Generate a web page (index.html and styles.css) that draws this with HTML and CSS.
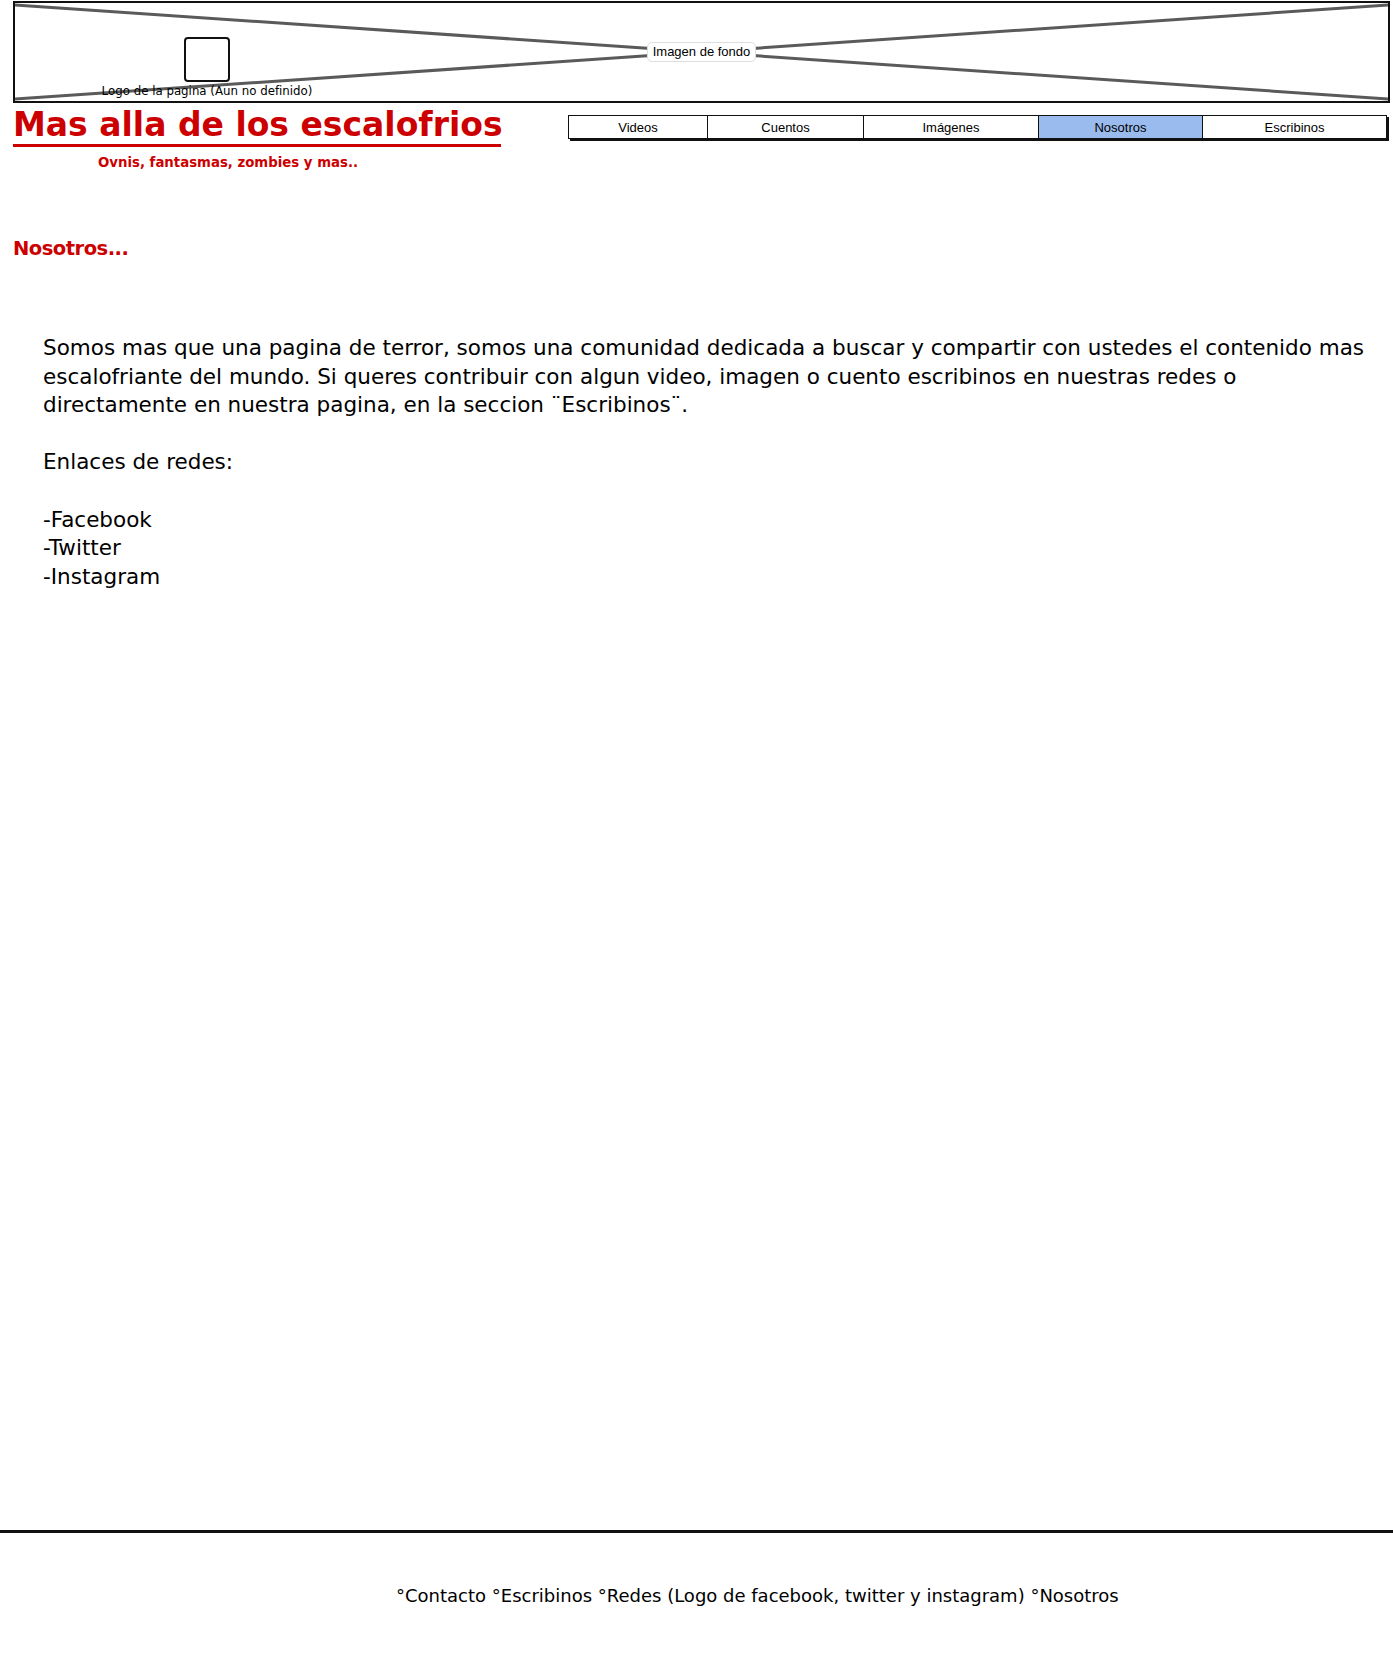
FILE: index.html
```html
<!DOCTYPE html>
<html lang="es">
<head>
<meta charset="utf-8">
<title>Mas alla de los escalofrios - Nosotros</title>
<link rel="stylesheet" href="styles.css">
</head>
<body>
<div class="page">
  <header class="top">
    <div class="banner">
      <svg class="banner-x" viewBox="0 0 100 100" preserveAspectRatio="none">
        <line x1="0" y1="2" x2="100" y2="98" vector-effect="non-scaling-stroke"/>
        <line x1="0" y1="98" x2="100" y2="2" vector-effect="non-scaling-stroke"/>
      </svg>
      <div class="logo">
        <div class="logo-box"></div>
        <div class="logo-label">Logo de la pagina (Aun no definido)</div>
      </div>
      <div class="banner-label">Imagen de fondo</div>
    </div>
    <div class="brand-row">
      <div class="brand">
        <h1 class="title">Mas alla de los escalofrios</h1>
        <p class="subtitle">Ovnis, fantasmas, zombies y mas..</p>
      </div>
      <nav class="nav">
        <a class="nav-item w1">Videos</a>
        <a class="nav-item w2">Cuentos</a>
        <a class="nav-item w3">Imágenes</a>
        <a class="nav-item w4 active">Nosotros</a>
        <a class="nav-item w5">Escribinos</a>
      </nav>
    </div>
  </header>
  <main class="content">
    <h2 class="section-title">Nosotros...</h2>
    <div class="text">
      <p>Somos mas que una pagina de terror, somos una comunidad dedicada a buscar y compartir con ustedes el contenido mas escalofriante del mundo. Si queres contribuir con algun video, imagen o cuento escribinos en nuestras redes o directamente en nuestra pagina, en la seccion ¨Escribinos¨.</p>
      <p>Enlaces de redes:</p>
      <p>-Facebook<br>-Twitter<br>-Instagram</p>
    </div>
  </main>
  <footer class="footer">
    <p class="footer-text">°Contacto °Escribinos °Redes (Logo de facebook, twitter y instagram) °Nosotros</p>
  </footer>
</div>
</body>
</html>
```
FILE: styles.css
```css
* { box-sizing: border-box; }
html, body { margin: 0; padding: 0; background: #fff; }
body { font-family: "DejaVu Sans", Verdana, sans-serif; color: #000; }
.page { width: 1393px; min-height: 1660px; display: flex; flex-direction: column; }

.top { padding: 1px 3px 0 13px; }
.banner {
  position: relative;
  width: 1377px;
  height: 102px;
  border: 2px solid #111;
  display: flex;
  align-items: flex-start;
  padding: 34px 0 0 87px;
}
.banner-x { position: absolute; left: 0; top: 0; width: 100%; height: 100%; }
.banner-x line { stroke: #5a5a5a; stroke-width: 3; }
.logo { position: relative; display: flex; flex-direction: column; align-items: center; width: 210px; }
.logo-box { width: 46px; height: 45px; border: 2px solid #111; border-radius: 4px; background: #fff; }
.logo-label { font-size: 11.8px; margin-top: 2px; white-space: nowrap; }
.banner-label {
  position: absolute;
  left: 632px; top: 39px;
  width: 109px; height: 20px;
  background: #fff;
  border: 1px solid #ddd;
  border-radius: 5px;
  font-family: "Liberation Sans", Arial, sans-serif;
  font-size: 13px;
  line-height: 18px;
  text-align: center;
}

.brand-row { display: flex; align-items: flex-start; }
.brand { width: 555px; }
.title {
  margin: 0;
  padding-top: 3px;
  width: 488px;
  color: #cc0000;
  font-size: 33px;
  font-weight: 700;
  line-height: 38px;
  border-bottom: 3px solid #cc0000;
  white-space: nowrap;
}
.subtitle {
  margin: 8px 0 0 85px;
  color: #cc0000;
  font-size: 13.3px;
  font-weight: 700;
}
.nav {
  display: flex;
  margin-top: 12px;
  height: 24px;
  border: 1px solid #111;
  box-shadow: 2px 2px 0 #111;
}
.nav-item {
  display: flex; align-items: center; justify-content: center;
  font-family: "Liberation Sans", Arial, sans-serif;
  font-size: 13px;
  color: #000;
  border-right: 1px solid #111;
}
.nav-item:last-child { border-right: 0; }
.nav-item.active { background: #99bbee; }
.w1 { width: 139px; } .w2 { width: 156px; } .w3 { width: 175px; } .w4 { width: 164px; } .w5 { width: 183px; }

.content { flex: 1; padding: 0 0 0 13px; }
.section-title {
  margin: 67px 0 0 0;
  color: #cc0000;
  font-size: 19.5px;
  letter-spacing: -0.5px;
  font-weight: 700;
}
.text { padding: 74px 20px 0 30px; font-size: 21.5px; line-height: 28.6px; }
.text p { margin: 0 0 28.6px 0; }

.footer { border-top: 3px solid #111; height: 130px; }
.footer-text { margin: 52px 0 0 396px; font-size: 18px; }
```
